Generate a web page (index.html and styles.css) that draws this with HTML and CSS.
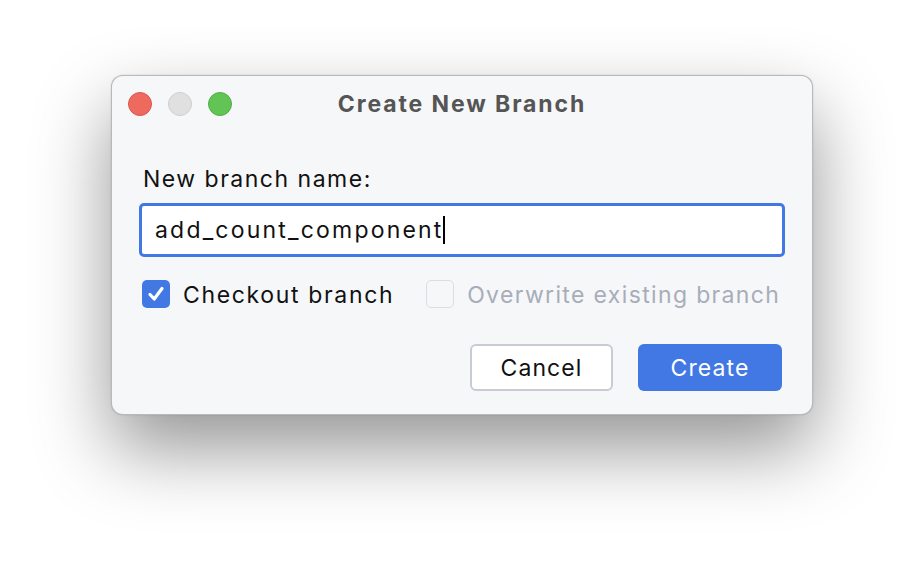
FILE: index.html
```html
<!DOCTYPE html>
<html>
<head>
<meta charset="utf-8">
<link rel="stylesheet" href="styles.css">
</head>
<body>
<div class="dialog">
  <div class="titlebar">
    <div class="lights">
      <span class="light red"></span>
      <span class="light gray"></span>
      <span class="light green"></span>
    </div>
    <div class="title">Create New Branch</div>
    <div></div>
  </div>
  <div class="content">
    <div class="label">New branch name:</div>
    <div class="input"><span class="value">add_count_component</span><span class="caret"></span></div>
    <div class="options">
      <label class="check">
        <span class="box checked"><svg width="28" height="28" viewBox="0 0 28 28"><path d="M8 14.5 L12.2 19 L20 8.5" fill="none" stroke="#fff" stroke-width="3.2" stroke-linecap="round" stroke-linejoin="round"/></svg></span>
        <span class="check-label">Checkout branch</span>
      </label>
      <label class="check disabled">
        <span class="box"></span>
        <span class="check-label">Overwrite existing branch</span>
      </label>
    </div>
    <div class="buttons">
      <button class="btn cancel">Cancel</button>
      <button class="btn primary">Create</button>
    </div>
  </div>
</div>
</body>
</html>
```
FILE: styles.css
```css
html, body {
  margin: 0;
  padding: 0;
  background: #ffffff;
}
body {
  font-family: Inter, "Noto Sans", "Liberation Sans", sans-serif;
  padding: 75px 0 0 111px;
  height: 562px;
  box-sizing: border-box;
  overflow: hidden;
}
.dialog {
  width: 702px;
  height: 340px;
  box-sizing: border-box;
  background: #f6f7f9;
  border: 1px solid rgba(0, 0, 0, 0.25);
  border-radius: 12px;
  box-shadow: 0 34px 76px rgba(0, 0, 0, 0.42), 0 0 2px rgba(0,0,0,0.15);
  display: flex;
  flex-direction: column;
}
.titlebar {
  height: 56px;
  display: grid;
  grid-template-columns: 1fr auto 1fr;
  align-items: center;
}
.lights {
  display: flex;
  gap: 16px;
  padding-left: 16px;
}
.light {
  width: 24px;
  height: 24px;
  border-radius: 50%;
  box-sizing: border-box;
}
.red { background: #ee6a5f; border: 1px solid #d9574d; }
.gray { background: #e0e0e0; border: 1px solid #cfcfcf; }
.green { background: #61c454; border: 1px solid #52ad45; }
.title {
  font-weight: 700;
  font-size: 23px;
  color: #555555;
  letter-spacing: 1.9px;
}
.content {
  padding: 0 27px;
  display: flex;
  flex-direction: column;
}
.label {
  margin-top: 34px;
  margin-left: 4px;
  font-size: 23px;
  line-height: 26px;
  letter-spacing: 1.5px;
  color: #111;
}
.input {
  margin-top: 11px;
  height: 54px;
  box-sizing: border-box;
  border: 3px solid #4278e4;
  border-radius: 5px;
  background: #fff;
  display: flex;
  align-items: center;
  padding-left: 13px;
  font-size: 23px;
  letter-spacing: 2.2px;
  color: #111;
}
.caret {
  display: inline-block;
  width: 2px;
  height: 28px;
  background: #000;
  margin-left: -1px;
}
.options {
  margin-top: 23px;
  height: 28px;
  display: flex;
  align-items: center;
  gap: 32px;
  padding-left: 3px;
}
.check {
  display: flex;
  align-items: center;
  gap: 13px;
  height: 28px;
  font-size: 23px;
  line-height: 28px;
  letter-spacing: 1.65px;
  color: #111;
}
.check-label { position: relative; top: 1px; }
.box {
  width: 28px;
  height: 28px;
  box-sizing: border-box;
  border-radius: 5px;
  border: 1.5px solid #dcdde1;
  background: #f6f7f9;
  display: block;
}
.box.checked {
  background: #4278e4;
  border: none;
}
.box svg { display: block; }
.disabled .check-label { color: #a8adb9; letter-spacing: 1.35px; }
.buttons {
  margin-top: 36px;
  display: flex;
  justify-content: flex-end;
  gap: 25px;
  padding-right: 3px;
}
.btn {
  font-family: inherit;
  font-size: 23px;
  letter-spacing: 1.1px;
  height: 47px;
  padding-top: 2px;
  border-radius: 6px;
  box-sizing: border-box;
}
.cancel {
  width: 143px;
  background: #fff;
  border: 2px solid #cacad3;
  color: #111;
}
.primary {
  width: 144px;
  background: #4278e4;
  border: none;
  color: #fff;
}
```
